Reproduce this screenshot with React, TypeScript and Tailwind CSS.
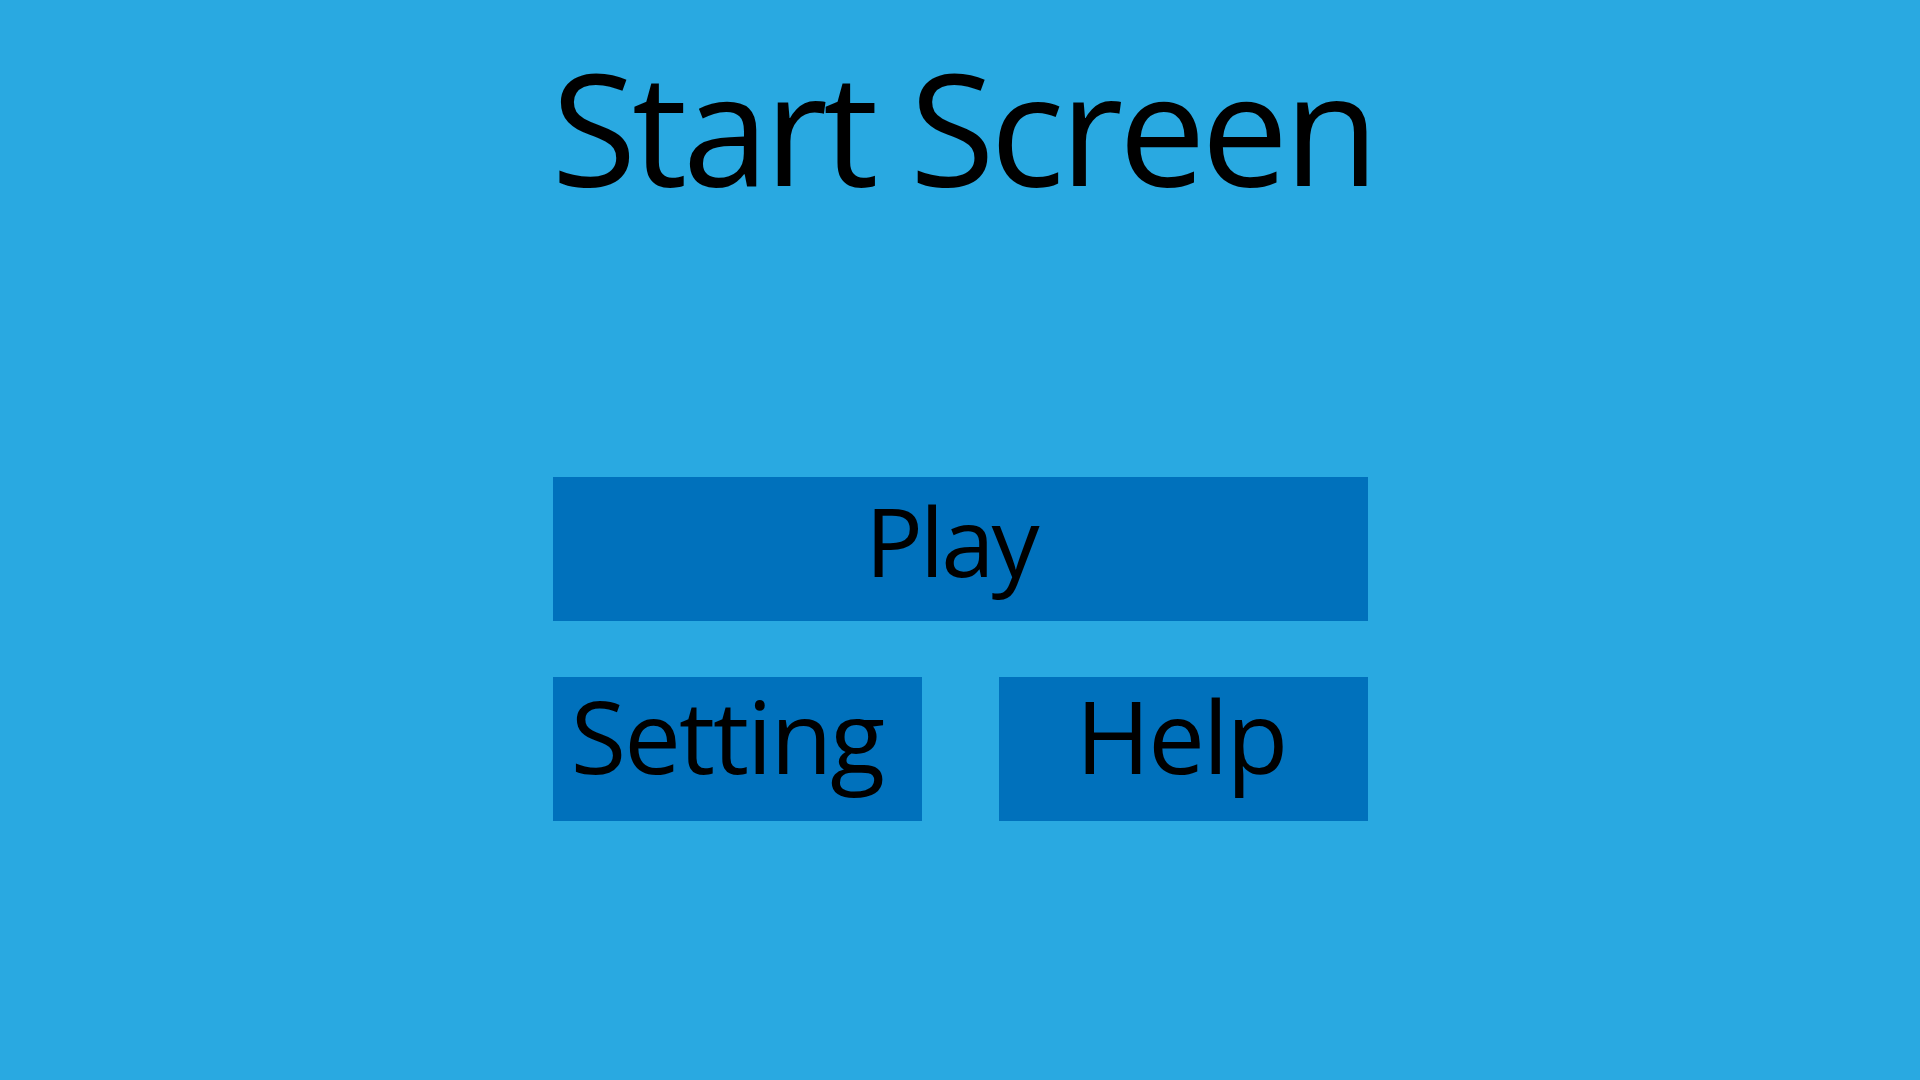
const font = { fontFamily: '"Open Sans", "Noto Sans", sans-serif' };

export default function App() {
  return (
    <div
      className="w-[1920px] h-[1080px] bg-[#29a9e1] flex flex-col items-center text-black overflow-hidden"
      style={font}
    >
      <h1 className="mt-[48px] pl-[6px] text-[155px] leading-none tracking-[-4.5px] font-normal">Start Screen</h1>

      <div className="mt-[274px] w-[815px] flex flex-col gap-[56px]">
        <button className="h-[144px] w-full bg-[#0071bc] pb-[18px] pr-[18px] flex items-center justify-center text-[96px] leading-none tracking-[-3px]">
          Play
        </button>
        <div className="flex justify-between">
          <button className="h-[144px] w-[369px] bg-[#0071bc] pb-[28px] pr-[20px] flex items-center justify-center text-[101px] leading-none tracking-[-2px]">
            Setting
          </button>
          <button className="h-[144px] w-[369px] bg-[#0071bc] pb-[28px] pr-[4px] flex items-center justify-center text-[101px] leading-none tracking-[-2px]">
            Help
          </button>
        </div>
      </div>
    </div>
  );
}
